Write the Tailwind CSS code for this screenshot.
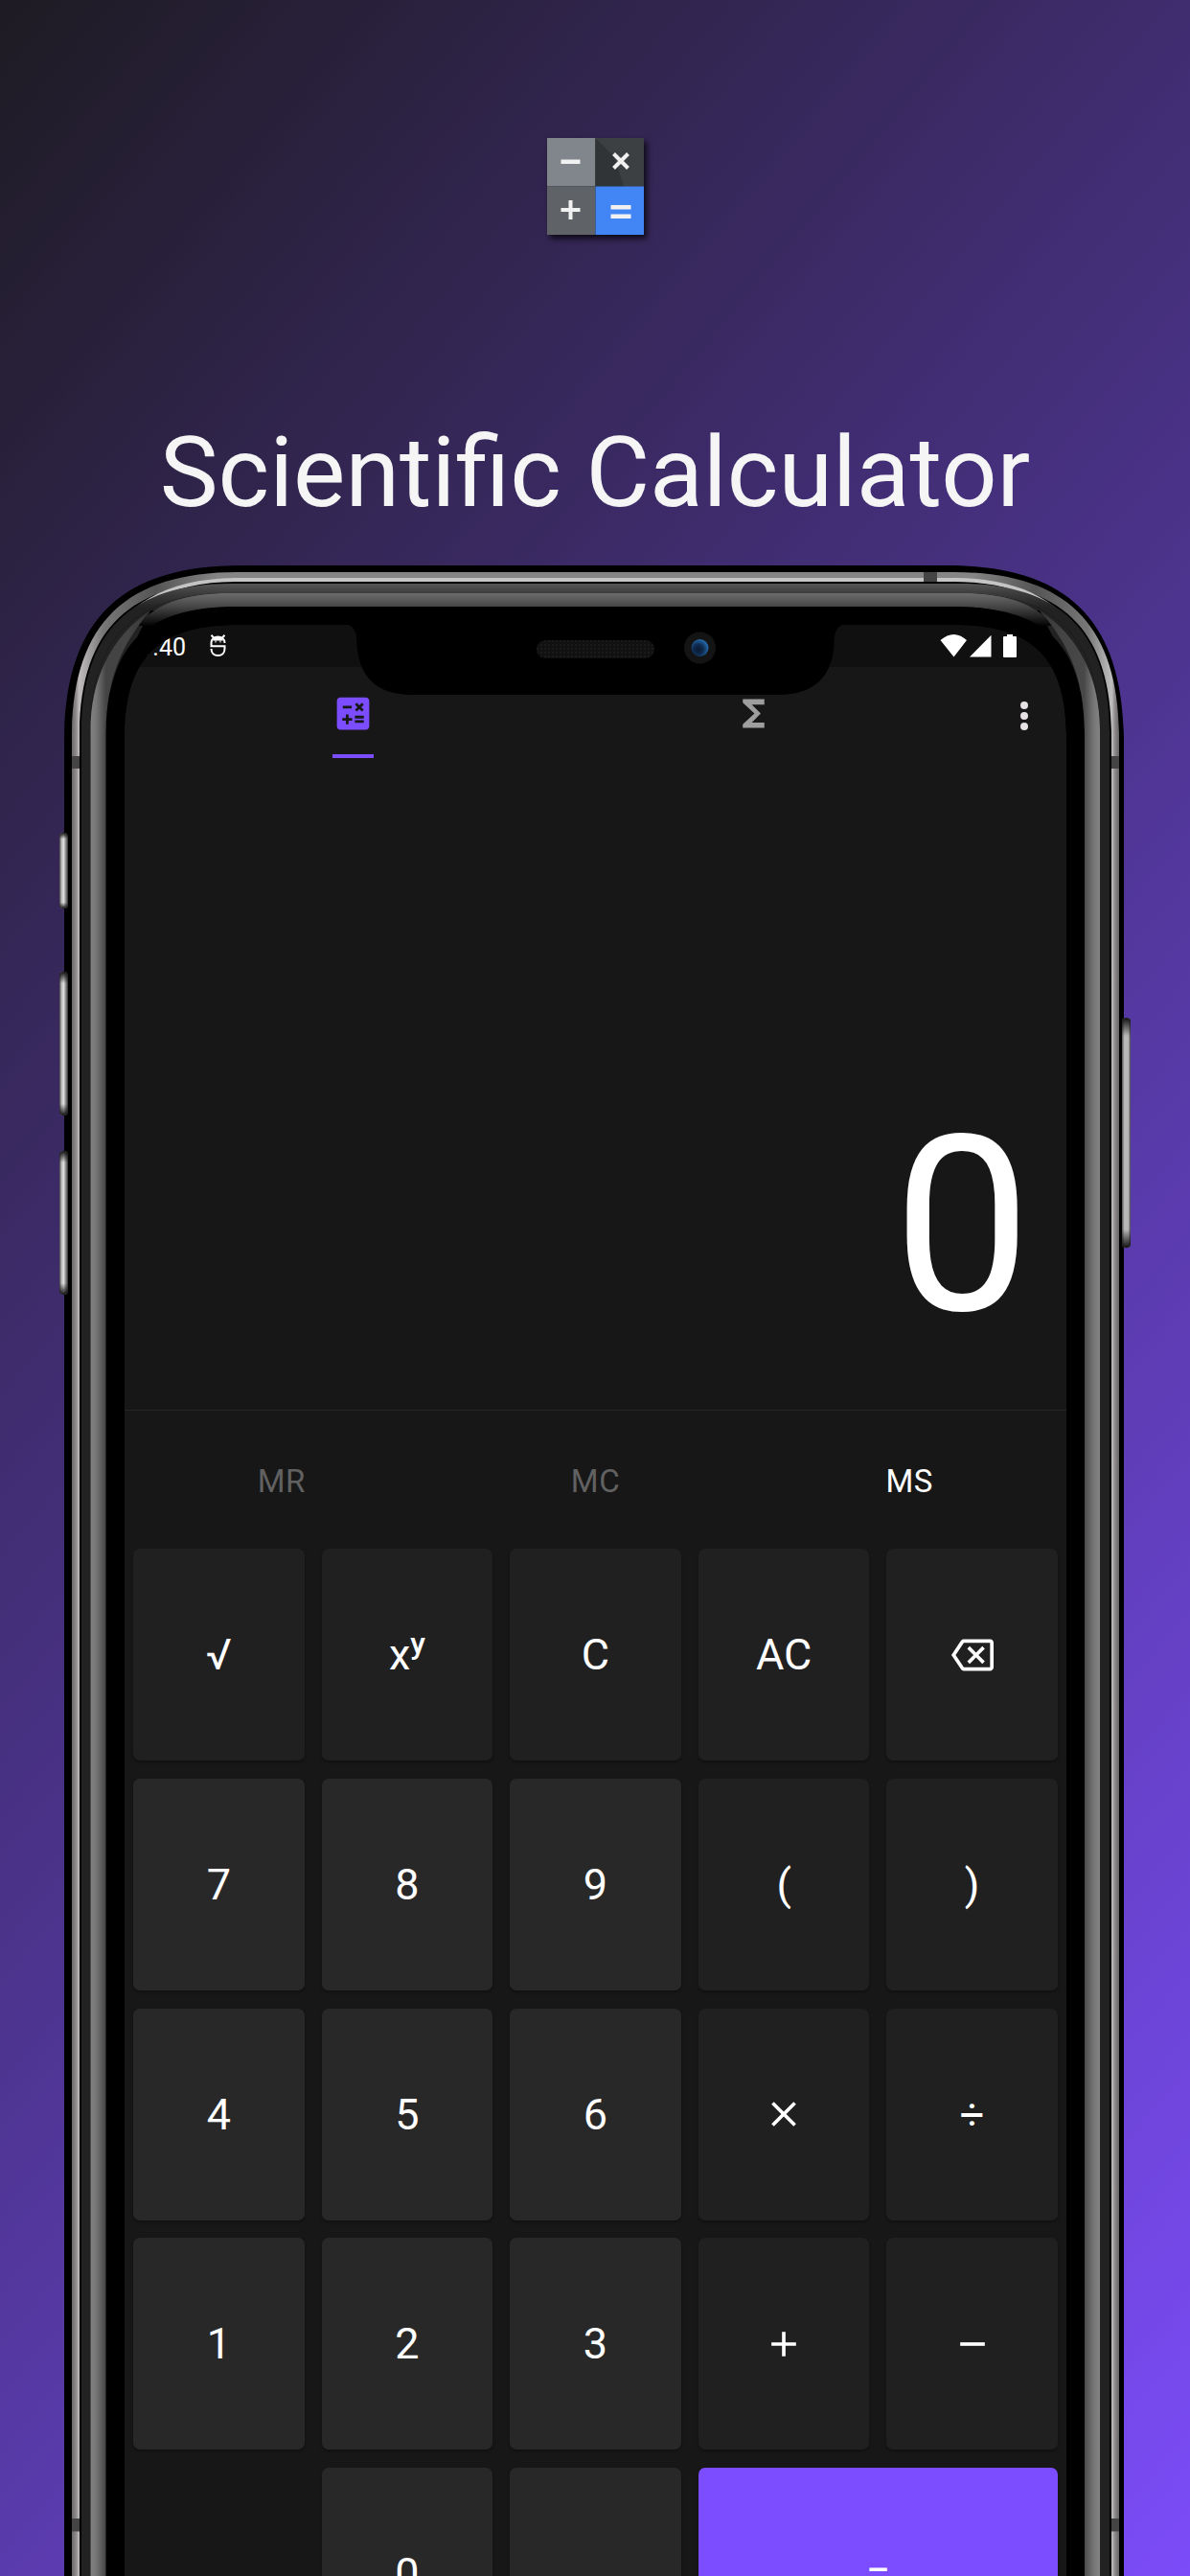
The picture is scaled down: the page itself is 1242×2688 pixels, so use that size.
<!DOCTYPE html>
<html lang="en">
<head>
<meta charset="utf-8">
<title>Scientific Calculator</title>
<script src="https://cdn.jsdelivr.net/npm/@tailwindcss/browser@4"></script>
</head>
<body class="w-[1242px] h-[2688px] overflow-hidden font-['Roboto',sans-serif]">
<main class="relative w-[1242px] h-[2688px] overflow-hidden bg-[linear-gradient(130deg,#1e1b23_0%,#7b4cf8_100%)]">
  <header class="h-[652px] flex flex-col items-center pt-36">
    <svg class="w-[101px] h-[101px] shrink-0 drop-shadow-[3px_4px_3px_rgba(0,0,0,0.75)]" viewBox="0 0 101 101">
      <path fill="#80868b" d="M0 0h50.5v50.5H0z"/><path fill="#3c4043" d="M50.500 0H101v50.500H50.500z"/><path fill="#313437" d="M50.500 0L101 50.500H50.500z"/><path fill="#3c4043" d="M70 19.500l31 31H80z"/>
      <path fill="#5f6368" d="M0 50.500h50.500V101H0z"/><path fill="#4285f4" d="M50.500 50.500H101V101H50.500z"/>
      <path fill="#f1f1f1" d="M14.500 22.500h20v4.500h-20zM14.500 73h8v-8h4v8h8v4h-8v8h-4v-8h-8zM66.500 70h21v4.500h-21zM66.500 79.500h21V84h-21z"/>
      <path stroke="#f1f1f1" stroke-width="4" d="M69.500 16.500l15 15M84.500 16.500l-15 15"/>
    </svg>
    <h1 class="mt-[188px] text-[102.5px] leading-[120px] text-[#f5f5f5] whitespace-nowrap">Scientific Calculator</h1>
  </header>

  <section class="absolute left-[130px] top-[652px] w-[983px] h-[2036px] bg-[#171717] overflow-hidden text-white">
    <div class="h-[44px] bg-[#101010] relative">
      <div class="absolute left-0 top-[6px] w-[64px] text-right text-[25px] leading-[36px]">11.40</div>
      <svg class="absolute left-[89px] top-[10px] w-[17px] h-[24px]" viewBox="0 0 17 24" fill="none" stroke="#fff" stroke-width="2">
        <path d="M1.500 12V9C1.500 4.500 5 2.500 8.500 2.500S15.500 4.500 15.500 9M1.500.8l2.500 2.700M15.500.8L13 3.500M.5 12.200h15V15c0 4.500-3 7-7 7s-7-2.500-7-7"/><path d="M3 6.500Q4.500 2.500 8.500 2.500T14 6.500z" fill="#fff" stroke="none"/><path d="M6 6v2.500M11 6v2.500" stroke="#bbb" stroke-width="1.500"/>
      </svg>
      <svg class="absolute left-[851px] top-[9px] w-[82px] h-[26px]" viewBox="0 0 82 26" fill="#fff"><path d="M.5 7Q14.500-5 28 7L14.500 24.500zM31 24.500L53.500 1.800v22.700zM66 4q0-1 1-1h3V1h6v2h3q1 0 1 1v20q0 1-1 1H67q-1 0-1-1z"/></svg>
    </div>

    <nav class="h-[96px] flex items-start pt-[26px] relative">
      <div class="w-[477px] flex flex-col items-center">
        <svg class="w-[45px] h-[45px]" viewBox="0 0 24 24" fill="#7c4dff"><path fill-rule="evenodd" d="M19 3H5c-1.100 0-2 .9-2 2v14c0 1.100.9 2 2 2h14c1.100 0 2-.9 2-2V5c0-1.100-.9-2-2-2zm-5.970 4.060L14.090 6l1.410 1.410L16.910 6l1.060 1.060-1.410 1.410 1.410 1.410-1.060 1.060-1.410-1.400-1.410 1.410-1.060-1.060 1.410-1.410-1.410-1.420zm-6.780.66h5v1.500h-5v-1.500zM11.500 16h-2v2H8v-2H6v-1.500h2v-2h1.500v2h2V16zm6.500 1.250h-5v-1.500h5v1.500zm0-2.500h-5v-1.500h5v1.500z"/></svg>
        <div class="mt-[20px] w-[43px] h-1 bg-[#7c4dff]"></div>
      </div>
      <div class="flex-1 pl-[157px]">
        <svg class="w-[45px] h-[45px]" viewBox="0 0 24 24" fill="#9e9e9e"><path d="M18 4H6v2l6.500 6L6 18v2h12v-3h-7l5-5-5-5h7z"/></svg>
      </div>
      <svg class="w-[45px] h-[45px] mr-[22px] mt-[2px]" viewBox="0 0 45 45" fill="#e6e1e5"><circle cx="23" cy="12" r="4"/><circle cx="23" cy="23" r="4"/><circle cx="23" cy="34" r="4"/></svg>
    </nav>

    <div class="h-[680px] border-b border-[#262626] flex justify-end items-end pr-[37px] pb-[41px]">
      <div class="text-[256px] leading-[300px]">0</div>
    </div>

    <div class="grid grid-cols-3 h-[144px] pt-[3px] items-center text-center text-[33px] tracking-[0.5px]">
      <span class="text-[#616161]">MR</span><span class="text-[#616161]">MC</span><span>MS</span>
    </div>

    <div class="grid grid-cols-5 gap-x-[18px] gap-y-[18.8px] px-[9px] auto-rows-[221px] text-[45px] leading-none *:flex *:items-center *:justify-center *:rounded-[7px] *:shadow-[0_2px_3px_rgba(0,0,0,0.3)]">
      <div class="bg-[#202020]">√</div>
      <div class="bg-[#202020]"><span>x</span><span class="text-[32px] font-medium -translate-y-[12px]">y</span></div>
      <div class="bg-[#202020]">C</div>
      <div class="bg-[#202020]">AC</div>
      <div class="bg-[#202020]"><svg class="w-[44px] h-[44px]" viewBox="0 0 24 24" fill="#fff"><path d="M22 3H7c-.69 0-1.230.35-1.590.88L0 12l5.410 8.110c.36.53.9.89 1.590.89h15c1.100 0 2-.9 2-2V5c0-1.100-.9-2-2-2zm0 16H7.070L2.400 12l4.660-7H22v14zm-11.590-2L14 13.410 17.590 17 19 15.590 15.410 12 19 8.410 17.590 7 14 10.590 10.410 7 9 8.410 12.590 12 9 15.590z"/></svg></div>

      <div class="bg-[#282828]">7</div><div class="bg-[#282828]">8</div><div class="bg-[#282828]">9</div><div class="bg-[#202020]">(</div><div class="bg-[#202020]">)</div>
      <div class="bg-[#282828]">4</div><div class="bg-[#282828]">5</div><div class="bg-[#282828]">6</div>
      <div class="bg-[#202020]"><svg class="w-[44px] h-[44px]" viewBox="0 0 24 24" fill="#fff"><path d="M19 6.410L17.590 5 12 10.590 6.410 5 5 6.410 10.590 12 5 17.590 6.410 19 12 13.410 17.590 19 19 17.590 13.410 12z"/></svg></div>
      <div class="bg-[#202020]">÷</div>
      <div class="bg-[#282828]">1</div><div class="bg-[#282828]">2</div><div class="bg-[#282828]">3</div>
      <div class="bg-[#202020]"><svg class="w-[44px] h-[44px]" viewBox="0 0 24 24" fill="#fff"><path d="M19 13h-6v6h-2v-6H5v-2h6V5h2v6h6z"/></svg></div>
      <div class="bg-[#202020]"><svg class="w-[44px] h-[44px]" viewBox="0 0 24 24" fill="#fff"><path d="M19 13H5v-2h14z"/></svg></div>
      <div class="invisible"></div><div class="bg-[#282828]">0</div><div class="bg-[#282828]">.</div><div class="bg-[#7c4dff] col-span-2">=</div>
    </div>
  </section>

  <!-- phone body: concentric rings around the screen, side keys, notch -->
  <svg class="absolute inset-0 w-[1242px] h-[2688px]" viewBox="0 0 1242 2688" fill-rule="evenodd">
    <defs>
      <linearGradient id="key"><stop offset="0" stop-color="#444"/><stop offset=".25" stop-color="#bbb"/><stop offset=".5" stop-color="#ddd"/><stop offset=".7" stop-color="#999"/><stop offset="1" stop-color="#333"/></linearGradient>
      <linearGradient id="keyR"><stop offset="0" stop-color="#555"/><stop offset=".3" stop-color="#bbb"/><stop offset=".75" stop-color="#b5b5b5"/><stop offset="1" stop-color="#444"/></linearGradient>
      <linearGradient id="ends" x2="0" y2="1"><stop offset="0" stop-color="#111"/><stop offset=".08" stop-color="#111" stop-opacity="0"/><stop offset=".92" stop-color="#111" stop-opacity="0"/><stop offset="1" stop-color="#111"/></linearGradient>
      <linearGradient id="silver" gradientUnits="userSpaceOnUse" x1="75" x2="1168" y1="0" y2="0"><stop offset="0" stop-color="#6d6a6b"/><stop offset=".004" stop-color="#8e8a8c"/><stop offset=".007" stop-color="#bfbabc"/><stop offset=".03" stop-color="#777"/><stop offset=".08" stop-color="#555"/><stop offset=".14" stop-color="#858585"/><stop offset=".86" stop-color="#858585"/><stop offset=".92" stop-color="#555"/><stop offset=".97" stop-color="#777"/><stop offset=".993" stop-color="#bfbfbf"/><stop offset=".996" stop-color="#8e8a8c"/><stop offset="1" stop-color="#666"/></linearGradient>
      <linearGradient id="topDark" gradientUnits="userSpaceOnUse" x1="0" x2="0" y1="609" y2="660"><stop offset="0" stop-color="#555"/><stop offset=".2" stop-color="#3c3c3c"/><stop offset=".5" stop-color="#222"/><stop offset="1" stop-color="#222"/></linearGradient>
      <linearGradient id="topBand" gradientUnits="userSpaceOnUse" x1="0" x2="0" y1="619" y2="654"><stop offset="0" stop-color="#6c6c6c"/><stop offset=".4" stop-color="#464646"/><stop offset="1" stop-color="#000"/></linearGradient>
      <linearGradient id="bandL" gradientUnits="userSpaceOnUse" x1="94" x2="160" y1="0" y2="0"><stop offset="0" stop-color="#848484"/><stop offset=".1" stop-color="#757575"/><stop offset=".25" stop-color="#444"/><stop offset=".6" stop-color="#444"/><stop offset="1" stop-color="#333"/></linearGradient>
      <linearGradient id="bandR" gradientUnits="userSpaceOnUse" x1="1148" x2="1082" y1="0" y2="0"><stop offset="0" stop-color="#848484"/><stop offset=".1" stop-color="#757575"/><stop offset=".25" stop-color="#484848"/><stop offset=".6" stop-color="#444"/><stop offset="1" stop-color="#333"/></linearGradient>
      <radialGradient id="lens" cx=".4" cy=".6" r=".6"><stop offset="0" stop-color="#0a1930"/><stop offset=".5" stop-color="#0f2c52"/><stop offset="1" stop-color="#2569a8"/></radialGradient>
      <pattern id="mesh" width="4" height="4" patternUnits="userSpaceOnUse"><path fill="#111" d="M0 0h4v4H0z"/><path fill="#1a1a1a" d="M0 0h2v2H0z"/></pattern>
    </defs>
    <path fill="#000" d="M67 2700V775C67 648 125 590 252 590H988C1115 590 1173 648 1173 775V2700ZM130 2700V770C130 687 165 652 248 652H995C1078 652 1113 687 1113 770V2700Z"/>
    <path fill="url(#silver)" d="M75 2700V770C75 652 130 597 248 597H995C1113 597 1168 652 1168 770V2700H1160V768C1160 657 1108 607 997 607H246C135 607 83 657 83 768V2700Z"/>
    <path fill="#c4c4c4" d="M105 680C130 632 170 604 246 603H997C1073 604 1113 632 1138 680C1110 636 1070 607 997 607H246C173 607 133 636 105 680Z"/>
    <path fill="url(#topDark)" d="M85 2700V765C85 660 136 609 241 609H1002C1107 609 1158 660 1158 765V2700H1148V762C1148 666 1100 619 1004 619H239C143 619 94.500 666 94.500 762V2700Z"/>
    <path fill="url(#topDark)" d="M94.500 762C94.500 666 143 619 239 619H1004C1100 619 1148 666 1148 762L1085 637H157Z"/>
    <path fill="url(#topBand)" d="M143 653C165 627 200 619 239 619H1004C1043 619 1078 627 1100 653H1081C1050 637 1030 633 995 633H248C213 633 193 637 162 653Z"/>
    <path fill="#000" d="M111 770C111 672 152 633 248 633H995C1091 633 1132 672 1132 770H1113C1113 687 1078 652 995 652H248C165 652 130 687 130 770Z"/>
    <path fill="url(#bandL)" d="M94.500 2700V762C94.500 710 115 665 157 637C125 675 110.500 710 110.500 770V2700Z"/>
    <path fill="url(#bandR)" d="M1148 2700V762C1148 710 1128 665 1085 637C1118 675 1132 710 1132 770V2700Z"/>
    <path fill="#444" d="M75 789h8v13h-8zM1160 789h8v13h-8zM964 597h14v10h-14zM75 2628h8v13.500h-8zM1160 2628h8v13.500h-8z"/>
    <rect x="62" y="869" width="9" height="79" rx="4" fill="url(#key)"/><rect x="62" y="869" width="9" height="79" rx="4" fill="url(#ends)"/>
    <rect x="62" y="1014" width="9" height="150" rx="4" fill="url(#key)"/><rect x="62" y="1014" width="9" height="150" rx="4" fill="url(#ends)"/>
    <rect x="62" y="1201" width="9" height="150" rx="4" fill="url(#key)"/><rect x="62" y="1201" width="9" height="150" rx="4" fill="url(#ends)"/>
    <rect x="1171" y="1062" width="9" height="240" rx="4" fill="url(#keyR)"/><rect x="1171" y="1062" width="9" height="240" rx="4" fill="url(#ends)"/>
    <path fill="#000" d="M359 651Q372 652 372.300 668C373 705 392 725 430 725H812C851 725 870 705 870.700 668Q871 652 884 651Z"/>
    <rect x="560" y="668" width="123" height="19" rx="9.500" fill="url(#mesh)"/>
    <circle cx="730.500" cy="676" r="16.500" fill="#141414"/><circle cx="730.500" cy="676" r="9" fill="url(#lens)"/>
  </svg>
</main>
</body>
</html>
